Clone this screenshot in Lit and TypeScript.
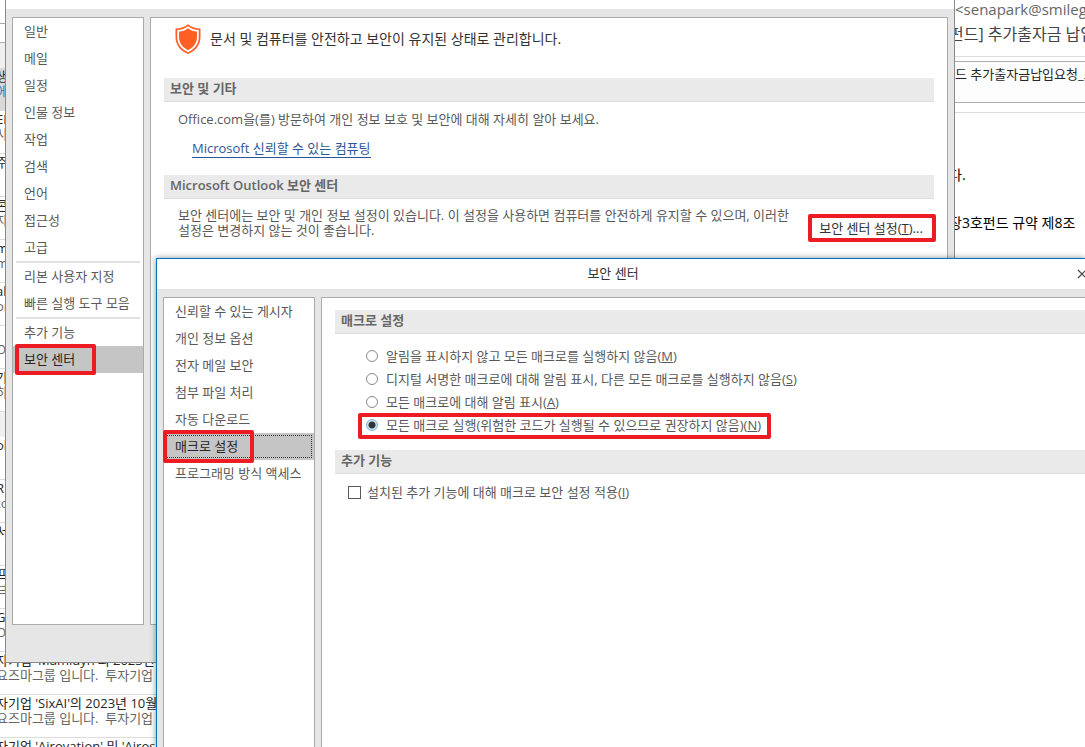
import { LitElement, html, css } from "lit";
import { customElement, state } from "lit/decorators.js";

interface Mail {
  kind: "mail" | "group" | "selected";
  subject?: string;
  preview?: string;
}

const mails: Mail[] = [
  { kind: "selected", subject: "생", preview: "에" },
  { kind: "mail", subject: "EN", preview: "사" },
  { kind: "mail", subject: "주", preview: "" },
  { kind: "mail", subject: "콘", preview: "자" },
  { kind: "mail", subject: "m", preview: "m" },
  { kind: "mail", subject: "al", preview: "or" },
  { kind: "mail", subject: "", preview: "O" },
  { kind: "mail", subject: "가", preview: "하" },
  { kind: "group" },
  { kind: "mail", subject: "ol", preview: "" },
  { kind: "mail", subject: "R", preview: "to" },
  { kind: "mail", subject: "서", preview: "" },
  { kind: "mail", subject: "프", preview: "브" },
  { kind: "mail", subject: "GE", preview: "O" },
  { kind: "mail", subject: "자기업 'Mamidyn'의 2023년 10월", preview: "요즈마그룹 입니다.  투자기업" },
  { kind: "mail", subject: "자기업 'SixAI'의 2023년 10월", preview: "요즈마그룹 입니다.  투자기업" },
  { kind: "mail", subject: "자기업 'Airovation' 및 'Airospl", preview: "" },
];

const optionGroups = [
  ["일반", "메일", "일정", "인물 정보", "작업", "검색", "언어", "접근성", "고급"],
  ["리본 사용자 지정", "빠른 실행 도구 모음"],
  ["추가 기능", "보안 센터"],
];

const trustPages = [
  "신뢰할 수 있는 게시자",
  "개인 정보 옵션",
  "전자 메일 보안",
  "첨부 파일 처리",
  "자동 다운로드",
  "매크로 설정",
  "프로그래밍 방식 액세스",
];

const macroLevels = [
  { text: "알림을 표시하지 않고 모든 매크로를 실행하지 않음", key: "M" },
  { text: "디지털 서명한 매크로에 대해 알림 표시, 다른 모든 매크로를 실행하지 않음", key: "S" },
  { text: "모든 매크로에 대해 알림 표시", key: "A" },
  { text: "모든 매크로 실행(위험한 코드가 실행될 수 있으므로 권장하지 않음)", key: "N" },
];

const shared = css`
  * {
    box-sizing: border-box;
  }
  button {
    font: inherit;
    color: inherit;
    background: none;
    border: 0;
    padding: 0;
    text-align: left;
    white-space: nowrap;
  }
  h1, h2, p {
    margin: 0;
    padding: 0;
    font: inherit;
  }
  .section {
    height: 24px;
    padding: 0 6px;
    border-bottom: 1px solid #dedede;
    background: #eaeaea;
    color: #666;
    font-weight: 600;
    line-height: 20px;
    white-space: nowrap;
  }
  .nav {
    flex: none;
    background: #fff;
    border: 1px solid #ababab;
  }
  .nav button {
    display: block;
    width: 100%;
    height: 27px;
    line-height: 24px;
    padding: 0 0 2px 11px;
  }
  .nav button.current {
    background: #c5c5c5;
    color: #262626;
  }
  .marked {
    position: relative;
  }
  .mark {
    position: absolute;
    border: 4px solid #ed1c24;
    border-radius: 2px;
    pointer-events: none;
  }
`;

@customElement("mail-list")
class MailList extends LitElement {
  static styles = [shared, css`
    :host {
      display: block;
      overflow: hidden;
      background: #fff;
      color: #262626;
    }
    .top {
      height: 24px;
      border-bottom: 1px solid #a9acb5;
    }
    .search {
      height: 19px;
      border-bottom: 1px solid #a9acb5;
    }
    .group {
      height: 25px;
      background: #f0f0f0;
    }
    .mail {
      height: 43px;
      padding-top: 1px;
      border-bottom: 1px solid #dcdcdc;
      line-height: 15px;
      white-space: pre;
      text-indent: -4px;
    }
    .mail.selected {
      background: #d9d9d9;
    }
    .preview {
      color: #666;
    }
    .selected .preview {
      color: #2b7fc4;
    }
    .subject {
      height: 15px;
    }
  `];

  render() {
    return html`
      <div class="top"></div>
      <div class="search"></div>
      <div class="group"></div>
      ${mails.map((m) => m.kind === "group"
        ? html`<div class="group"></div>`
        : html`<div class="mail ${m.kind}"><div class="subject">${m.subject}</div><div class="preview">${m.preview}</div></div>`)}
    `;
  }
}

@customElement("reading-pane")
class ReadingPane extends LitElement {
  static styles = [shared, css`
    :host {
      display: block;
      overflow: hidden;
      background: #fff;
      color: #262626;
      white-space: nowrap;
    }
    .from {
      height: 20px;
      line-height: 18px;
      font-size: 15px;
      color: #666;
    }
    .subject {
      height: 37px;
      line-height: 28px;
      font-size: 16px;
      color: #444;
      border-bottom: 1px solid #dcdcdc;
      text-indent: -6px;
    }
    .file {
      height: 42px;
      margin-top: 4px;
      border: 1px solid #ababab;
      border-width: 1px 0;
      background: #fdfdfd;
      line-height: 24px;
    }
    .body {
      margin-top: 9px;
      padding-top: 50px;
      border-top: 1px solid #dcdcdc;
      font-size: 14px;
      color: #000;
    }
    .body p {
      height: 48px;
      line-height: 24px;
      text-indent: -6px;
    }
  `];

  render() {
    return html`
      <div class="from">&lt;senapark@smilegate</div>
      <div class="subject">펀드] 추가출자금 납입</div>
      <div class="file">드 추가출자금납입요청_스</div>
      <div class="body">
        <p>다.</p>
        <p>장3호펀드 규약 제8조</p>
      </div>
    `;
  }
}

@customElement("options-dialog")
class OptionsDialog extends LitElement {
  @state() current = "보안 센터";

  static styles = [shared, css`
    :host {
      display: flex;
      flex-direction: column;
      background: #e6e6e6;
      border: 1px solid #8a8a8a;
      border-top: 0;
      color: #595959;
    }
    .caption {
      height: 9px;
      background: #fff;
    }
    .content {
      flex: 1;
      display: flex;
      gap: 6px;
      padding: 8px 6px 37px;
      min-height: 0;
    }
    .nav {
      width: 132px;
    }
    .group + .group::before {
      content: "";
      display: block;
      height: 2px;
      margin: 0 3px;
      background: #e1e1e1;
    }
    .mark.item {
      inset: -2px 47px -2px 2px;
    }
    .page {
      flex: 1;
      min-width: 0;
      background: #fff;
      border: 1px solid #ababab;
      padding: 0 13px;
    }
    .intro {
      display: flex;
      align-items: center;
      gap: 8px;
      height: 42px;
      padding-left: 10px;
      margin-bottom: 18px;
      font-size: 14px;
      color: #333;
    }
    .text {
      padding: 8px 14px 0;
      line-height: 18px;
    }
    .link {
      padding: 11px 28px 18px;
      line-height: 18px;
    }
    a {
      color: #2b579a;
      text-decoration: none;
      border-bottom: 1px solid #2b579a;
    }
    .center {
      display: flex;
      justify-content: space-between;
      padding: 9px 0 0 14px;
    }
    .center p {
      line-height: 15px;
      white-space: nowrap;
    }
    .marked.open {
      flex: none;
      width: 126px;
      height: 26px;
      margin-top: 7px;
      color: #333;
    }
    .open button {
      width: 100%;
      line-height: 26px;
      text-align: center;
      background: #fdfdfd;
    }
    .open .mark {
      inset: -1px -2px -1px 0;
    }
  `];

  render() {
    return html`
      <div class="caption"></div>
      <div class="content">
        <nav class="nav">
          ${optionGroups.map((g) => html`<div class="group">${g.map((t) => html`
            <div class="marked">
              <button class=${t === this.current ? "current" : ""} @click=${() => (this.current = t)}>${t}</button>
              ${t === "보안 센터" ? html`<span class="mark item"></span>` : ""}
            </div>`)}</div>`)}
        </nav>
        <main class="page">
          <div class="intro">
            <svg width="28" height="32" viewBox="0 0 28 32" aria-hidden="true">
              <path d="M14 1.2C17 4 21.500 5.300 26.500 5.500V14C26.500 22 21.500 28 14 31C6.500 28 1.500 22 1.500 14V5.500C6.500 5.300 11 4 14 1.200Z" fill="#ff5e25"/>
              <path d="M14 3.200C17 5.500 20.700 6.800 24.800 7.100V14C24.800 21 20.500 26.300 14 29.200C7.500 26.300 3.200 21 3.200 14V7.100C7.300 6.800 11 5.500 14 3.200Z" fill="#fff"/>
              <path d="M14 5.300C16.800 7.400 19.500 8.400 23 8.700V14C23 20 19.500 24.500 14 27.200C8.500 24.500 5 20 5 14V8.700C8.500 8.400 11.200 7.400 14 5.300Z" fill="#ff5e25"/>
            </svg>
            <h1>문서 및 컴퓨터를 안전하고 보안이 유지된 상태로 관리합니다.</h1>
          </div>
          <h2 class="section">보안 및 기타</h2>
          <p class="text">Office.com을(를) 방문하여 개인 정보 보호 및 보안에 대해 자세히 알아 보세요.</p>
          <p class="link"><a href="#trust">Microsoft 신뢰할 수 있는 컴퓨팅</a></p>
          <h2 class="section">Microsoft Outlook 보안 센터</h2>
          <div class="center">
            <p>보안 센터에는 보안 및 개인 정보 설정이 있습니다. 이 설정을 사용하면 컴퓨터를 안전하게 유지할 수 있으며, 이러한<br>설정은 변경하지 않는 것이 좋습니다.</p>
            <div class="marked open">
              <button>보안 센터 설정(<u>T</u>)...</button>
              <span class="mark"></span>
            </div>
          </div>
        </main>
      </div>
    `;
  }
}

@customElement("trust-dialog")
class TrustDialog extends LitElement {
  @state() current = "매크로 설정";
  @state() level = "N";

  static styles = [shared, css`
    :host {
      display: flex;
      flex-direction: column;
      background: #e6e6e6;
      border: 1px solid #0072c6;
      border-width: 1px 0 0 1px;
      box-shadow: 0 0 6px rgba(0, 0, 0, 0.45);
      color: #595959;
    }
    .caption {
      display: flex;
      align-items: center;
      height: 31px;
      background: #fff;
      border-bottom: 1px solid #e0e0e0;
      color: #333;
    }
    .caption h1 {
      flex: 1;
      padding: 0 8px 2px 0;
      text-align: center;
    }
    .close {
      flex: none;
      width: 10px;
      height: 10px;
      margin-right: -2px;
    }
    .close svg {
      display: block;
    }
    .content {
      flex: 1;
      display: flex;
      gap: 6px;
      padding: 7px 0 0 6px;
    }
    .nav {
      width: 152px;
      border-bottom: 0;
    }
    .nav button.current {
      outline: 1px dotted #333;
      outline-offset: -3px;
    }
    .mark.item {
      inset: -3px 60px -3px -1px;
    }
    .page {
      flex: 1;
      min-width: 0;
      background: #fff;
      border: 1px solid #ababab;
      border-width: 1px 0 0 1px;
      padding: 12px 0 0 13px;
    }
    .levels {
      padding: 10px 0 14px 31px;
    }
    .level {
      display: flex;
      align-items: center;
      width: max-content;
      height: 23px;
    }
    label {
      white-space: nowrap;
      line-height: 20px;
    }
    input {
      appearance: none;
      flex: none;
      margin: 0;
      background: #fff;
    }
    input[type="radio"] {
      width: 12px;
      height: 12px;
      margin-right: 8px;
      border: 1px solid #8a8a8a;
      border-radius: 50%;
    }
    input[type="radio"]:checked {
      border-color: #7fb2d9;
      background: radial-gradient(circle, #333 0 3px, #cde6f7 4px);
    }
    .level .mark {
      inset: 0 -10px -3px -8px;
    }
    .addin {
      display: flex;
      align-items: center;
      padding: 8px 13px;
    }
    input[type="checkbox"] {
      width: 13px;
      height: 13px;
      margin-right: 6px;
      border: 1px solid #595959;
    }
    input[type="checkbox"]:checked {
      background: #595959;
    }
  `];

  render() {
    return html`
      <header class="caption">
        <h1>보안 센터</h1>
        <button class="close" aria-label="닫기">
          <svg width="10" height="10" viewBox="0 0 10 10"><path d="M1 1L9 9M9 1L1 9" stroke="#444" stroke-width="1.200"/></svg>
        </button>
      </header>
      <div class="content">
        <nav class="nav">
          ${trustPages.map((t) => html`
            <div class="marked">
              <button class=${t === this.current ? "current" : ""} @click=${() => (this.current = t)}>${t}</button>
              ${t === "매크로 설정" ? html`<span class="mark item"></span>` : ""}
            </div>`)}
        </nav>
        <main class="page">
          <h2 class="section">매크로 설정</h2>
          <div class="levels">
            ${macroLevels.map((l) => html`
              <div class="level marked">
                <input type="radio" name="level" id=${l.key} .checked=${l.key === this.level} @change=${() => (this.level = l.key)}>
                <label for=${l.key}>${l.text}(<u>${l.key}</u>)</label>
                ${l.key === "N" ? html`<span class="mark"></span>` : ""}
              </div>`)}
          </div>
          <h2 class="section">추가 기능</h2>
          <div class="addin">
            <input type="checkbox" id="addin">
            <label for="addin">설치된 추가 기능에 대해 매크로 보안 설정 적용(<u>I</u>)</label>
          </div>
        </main>
      </div>
    `;
  }
}

@customElement("app-root")
class AppRoot extends LitElement {
  static styles = css`
    :host {
      display: block;
      position: relative;
      height: 100vh;
      overflow: hidden;
      background: #fff;
      font: 13px/18px "Open Sans", "Noto Sans CJK KR", sans-serif;
    }
    .desk {
      display: grid;
      grid-template-columns: 156px 1fr 130px;
      height: 100%;
    }
    reading-pane {
      grid-column: 3;
    }
    .options {
      position: absolute;
      left: 5px;
      top: 0;
      right: 130px;
      height: 662px;
    }
    .trust {
      position: absolute;
      left: 156px;
      top: 258px;
      right: 0;
      bottom: 0;
    }
  `;

  render() {
    return html`
      <div class="desk">
        <mail-list></mail-list>
        <reading-pane></reading-pane>
      </div>
      <options-dialog class="options"></options-dialog>
      <trust-dialog class="trust"></trust-dialog>
    `;
  }
}
